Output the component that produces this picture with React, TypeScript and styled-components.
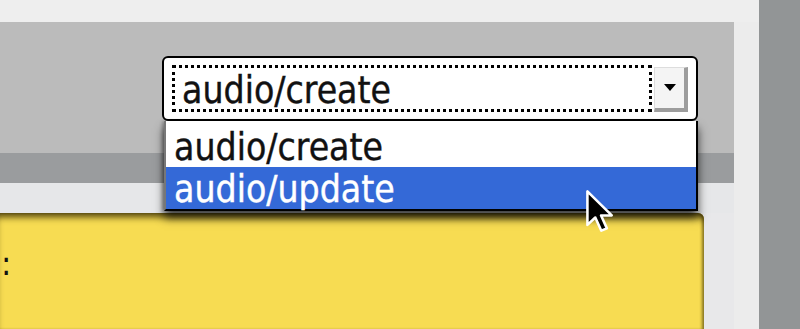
import React from 'react';
import styled, {createGlobalStyle} from 'styled-components';

const GlobalStyle = createGlobalStyle`
  html, body {
    margin: 0;
    padding: 0;
    background: #ececec;
  }
  body {
    font-family: "DejaVu Sans Condensed", "DejaVu Sans", sans-serif;
  }
`

const options = ['audio/create', 'audio/update']

export default function App() {
    return (
        <>
            <GlobalStyle/>
            <Screen>
                <Main>
                    <TopStrip/>
                    <Content>
                        <Toolbar>
                            <Select>
                                <FocusRing>{options[0]}</FocusRing>
                                <ArrowButton><Triangle/></ArrowButton>
                                <Dropdown>
                                    {options.map((o, i) => (
                                        <Option key={o} $active={i === 1}>{o}</Option>
                                    ))}
                                    <Cursor viewBox="0 0 12 19" width="28" height="44">
                                        <path d="M1 1 L1 15.5 L4.4 12.3 L7 18 L9.4 17 L6.9 11.4 L11.5 11.4 Z"
                                              fill="#000" stroke="#fff" strokeWidth="1.1" strokeLinejoin="round"/>
                                    </Cursor>
                                </Dropdown>
                            </Select>
                        </Toolbar>
                        <Band/>
                        <SubBand/>
                        <Bottom>
                            <YellowPanel>
                                <Label>:</Label>
                            </YellowPanel>
                        </Bottom>
                    </Content>
                </Main>
                <RightBar/>
            </Screen>
        </>
    );
}

const Screen = styled.div`
  display: flex;
  width: 800px;
  height: 329px;
  overflow: hidden;
`

const Main = styled.div`
  width: 759px;
  display: flex;
  flex-direction: column;
  background: #ececec;
`

const TopStrip = styled.div`
  height: 22px;
  background: #eeeeee;
`

const Content = styled.div`
  width: 734px;
  flex: 1;
  display: flex;
  flex-direction: column;
`

const Toolbar = styled.div`
  height: 131px;
  box-sizing: border-box;
  background: #bbbbbb;
  display: flex;
  justify-content: flex-end;
  align-items: flex-start;
  padding: 34px 36px 0 0;
  position: relative;
  z-index: 2;
`

const Band = styled.div`
  height: 30px;
  background: #9a9c9e;
`

const SubBand = styled.div`
  height: 30px;
  background: #e6e7e9;
`

const Bottom = styled.div`
  flex: 1;
  display: flex;
  background: #e8e8ea;
`

const YellowPanel = styled.div`
  width: 703px;
  background: #f7dc52;
  border-top-right-radius: 6px;
  box-shadow: inset 0 8px 7px -4px rgba(50, 40, 0, 0.85),
  inset -3px 0 3px -1px rgba(60, 50, 0, 0.55);
  padding: 30px 0 0 1px;
`

const Label = styled.div`
  font-size: 34px;
  color: #111;
  line-height: 40px;
`

const Select = styled.div`
  position: relative;
  width: 536px;
  height: 65px;
  box-sizing: border-box;
  border: 2px solid #000;
  border-radius: 6px;
  background: #fff;
  display: flex;
  align-items: center;
  gap: 2px;
  padding: 0 8px;
`

const FocusRing = styled.div`
  flex: 1;
  height: 47px;
  box-sizing: border-box;
  border: 3px dotted #000;
  display: flex;
  align-items: center;
  padding: 3px 0 0 7px;
  font-size: 37px;
  color: #111;
  -webkit-text-stroke: 0.4px #111;
`

const ArrowButton = styled.div`
  width: 34px;
  height: 45px;
  box-sizing: border-box;
  margin-top: 1px;
  background: #f4f4f4;
  border-right: 4px solid #9d9d9d;
  border-bottom: 4px solid #9d9d9d;
  border-top: 1px solid #ddd;
  border-left: 1px solid #ddd;
  display: flex;
  align-items: center;
  justify-content: center;
`

const Triangle = styled.div`
  width: 0;
  height: 0;
  border-left: 6px solid transparent;
  border-right: 6px solid transparent;
  border-top: 7px solid #000;
`

const Dropdown = styled.div`
  position: absolute;
  top: calc(100% + 2px);
  left: 0;
  right: -2px;
  background: #fff;
  border: 2px solid #000;
  border-left-color: #777;
  border-top: none;
  box-shadow: 0 7px 9px rgba(0, 0, 0, 0.7), -2px 0 3px rgba(0, 0, 0, 0.25);
  padding-top: 3px;
`

const Option = styled.div<{ $active?: boolean }>`
  height: ${p => p.$active ? 42 : 43}px;
  display: flex;
  align-items: center;
  padding: 3px 0 0 8px;
  box-sizing: border-box;
  font-size: 37px;
  color: ${p => p.$active ? '#fff' : '#111'};
  -webkit-text-stroke: 0.4px ${p => p.$active ? '#fff' : '#111'};
  background: ${p => p.$active ? '#3469d7' : '#fff'};
`

const Cursor = styled.svg`
  position: absolute;
  left: 419px;
  top: 68px;
`

const RightBar = styled.div`
  width: 41px;
  background: #929596;
`
